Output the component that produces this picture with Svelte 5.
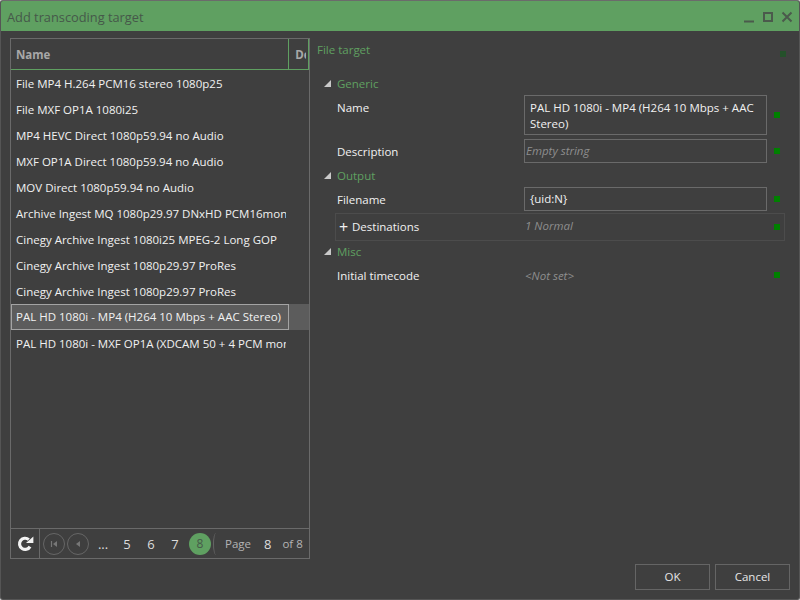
<script>
  const rows = [
    'File MP4 H.264 PCM16 stereo 1080p25',
    'File MXF OP1A 1080i25',
    'MP4 HEVC Direct 1080p59.94 no Audio',
    'MXF OP1A Direct 1080p59.94 no Audio',
    'MOV Direct 1080p59.94 no Audio',
    'Archive Ingest MQ 1080p29.97 DNxHD PCM16mono',
    'Cinegy Archive Ingest 1080i25 MPEG-2 Long GOP',
    'Cinegy Archive Ingest 1080p29.97 ProRes',
    'Cinegy Archive Ingest 1080p29.97 ProRes',
    'PAL HD 1080i - MP4 (H264 10 Mbps + AAC Stereo)',
    'PAL HD 1080i - MXF OP1A (XDCAM 50 + 4 PCM mono)'
  ];
</script>

<div class="win">
  <header class="title">
    <span class="title-text">Add transcoding target</span>
    <div class="win-btns">
      <svg width="12" height="12" viewBox="0 0 12 12"><path d="M1 10.5h10" stroke="#4b5a4c" stroke-width="2"/></svg>
      <svg width="12" height="12" viewBox="0 0 12 12"><rect x="2" y="2" width="8" height="8" fill="none" stroke="#4b5a4c" stroke-width="2"/></svg>
      <svg width="12" height="12" viewBox="0 0 12 12"><path d="M1.5 1.5l9 9M10.5 1.5l-9 9" stroke="#4b5a4c" stroke-width="2"/></svg>
    </div>
  </header>

  <div class="body">
    <section class="list">
      <div class="head">
        <div class="h-name">Name</div>
        <div class="h-de"><span>De</span></div>
      </div>
      <div class="rows">
        {#each rows as r, i}
          <div class="row" class:sel={i === 9}><span class="cell">{r}</span></div>
        {/each}
      </div>
      <div class="pager">
        <div class="refresh">
          <svg width="18" height="18" viewBox="0 0 18 18"><path d="M14 11.6A5.6 5.6 0 1 1 12.8 4.6" fill="none" stroke="#f2f2f2" stroke-width="3.2"/><path d="M10 8h7.4V1.5z" fill="#f2f2f2"/></svg>
        </div>
        <div class="pages">
          <span class="circle"><svg width="8" height="8" viewBox="0 0 8 8"><path d="M1.5 1v6" stroke="#777" stroke-width="1.2"/><path d="M7 1v6L3 4z" fill="#777"/></svg></span>
          <span class="circle"><svg width="8" height="8" viewBox="0 0 8 8"><path d="M6 1v6L2 4z" fill="#777"/></svg></span>
          <span class="num">...</span>
          <span class="num">5</span>
          <span class="num">6</span>
          <span class="num">7</span>
          <span class="cur">8</span>
          <span class="cut"></span>
          <span class="page-l">Page</span>
          <span class="page-n">8</span>
          <span class="page-l">of 8</span>
        </div>
      </div>
    </section>

    <section class="props">
      <div class="cat-title">File target <i class="dot dim"></i></div>

      <div class="group"><i class="tri"></i>Generic</div>
      <div class="prop tall">
        <label>Name</label>
        <div class="box multi">PAL HD 1080i - MP4 (H264 10 Mbps + AAC Stereo)</div>
        <i class="dot"></i>
      </div>
      <div class="prop">
        <label>Description</label>
        <div class="box hint">Empty string</div>
        <i class="dot"></i>
      </div>

      <div class="group"><i class="tri"></i>Output</div>
      <div class="prop">
        <label>Filename</label>
        <div class="box">{'{uid:N}'}</div>
        <i class="dot"></i>
      </div>
      <div class="prop dest">
        <label><b>+</b>Destinations</label>
        <div class="plain">1 Normal</div>
        <i class="dot"></i>
      </div>

      <div class="group"><i class="tri"></i>Misc</div>
      <div class="prop">
        <label>Initial timecode</label>
        <div class="plain">&lt;Not set&gt;</div>
        <i class="dot"></i>
      </div>
    </section>
  </div>

  <footer class="foot">
    <button>OK</button>
    <button>Cancel</button>
  </footer>
</div>

<style>
  :global(body) { margin: 0; background: #d8d8d8; }
  .win {
    width: 800px; height: 600px; box-sizing: border-box;
    display: flex; flex-direction: column;
    background: #3f3f3f; color: #f1f1f1;
    border-top: 1px solid #6b6b6b; border-right: 1px solid #555; border-left: 1px solid #555; border-bottom: 1px solid #555;
    border-radius: 3px;
    font: 11.5px/16px "Open Sans", "Noto Sans", sans-serif;
    overflow: hidden;
  }
  .title {
    height: 30px; flex: none; background: #5fa061; color: #46584a;
    display: flex; align-items: center; justify-content: space-between;
    padding: 1px 6px 0 6px; box-sizing: border-box; font-size: 12.8px; margin-left: -1px; margin-right: -1px;
  }
  .title-text { padding-left: 1px; }
  .win-btns { display: flex; gap: 7px; align-items: center; margin-right: 1px; padding-top: 1px; }
  .win-btns svg { display: block; }
  .body { flex: 1; display: flex; min-height: 0; padding: 7px 0 0 9px; }
  .list {
    width: 300px; height: 521px; box-sizing: border-box; flex: none;
    border: 1px solid #6a6a6a; display: flex; flex-direction: column;
  }
  .head { height: 31px; flex: none; display: flex; box-sizing: border-box; border-bottom: 1px solid #5fa061; font-weight: 700; color: #a8a8a8; }
  .h-name { width: 277px; padding-left: 5px; line-height: 31px; border-right: 1px solid #5fa061; }
  .h-de { width: 20px; border-right: 1px solid #5fa061; line-height: 31px; padding-left: 6px; box-sizing: border-box; overflow: hidden; }
  .h-de span { display: block; width: 11px; overflow: hidden; }
  .rows { flex: 1; min-height: 0; }
  .row { height: 26px; line-height: 25px; }
  .cell { display: block; width: 276px; padding-left: 5px; white-space: nowrap; overflow: hidden; height: 26px; box-sizing: border-box; border: 1px solid transparent; border-left: 0; }
  .row.sel { background: #5c5c5c; }
  .sel .cell { width: 278px; border: 1px solid #a3a3a3; padding-left: 4px; line-height: 24px; }
  .pager { height: 30px; flex: none; box-sizing: border-box; border-top: 1px solid #6a6a6a; display: flex; align-items: center; }
  .refresh { width: 29px; height: 29px; box-sizing: border-box; border-right: 1px solid #6a6a6a; display: flex; align-items: center; justify-content: center; }
  .refresh svg { display: block; }
  .pages { display: flex; align-items: center; flex: 1; padding-left: 3px; color: #dcdcdc; }
  .circle { width: 22px; height: 22px; box-sizing: border-box; border: 1px solid #666; border-radius: 50%; margin-right: 2px; display: flex; align-items: center; justify-content: center; flex: none; }
  .num { width: 24px; text-align: center; font-size: 13px; flex: none; }
  .cur { width: 22px; height: 22px; line-height: 22px; border-radius: 50%; background: #5fa061; color: #46584a; text-align: center; margin-left: 2px; flex: none; font-size: 12px; }
  .cut { width: 6px; height: 22px; box-sizing: border-box; border-left: 1px solid #666; border-radius: 50% 0 0 50% / 50% 0 0 50%; margin-left: 2px; flex: none; }
  .page-l { color: #b4b4b4; font-size: 11.5px; white-space: nowrap; }
  .pages .cut + .page-l { margin-left: 6px; }
  .page-n { margin: 0 11px 0 13px; font-size: 13px; }
  .props { flex: 1; padding-left: 7px; position: relative; }
  .cat-title { height: 34px; line-height: 24px; color: #5fa061; position: relative; }
  .group { height: 23px; line-height: 24px; color: #5fa061; padding-left: 20px; position: relative; }
  .dest + .group { margin-top: -1px; }
  .tri { position: absolute; left: 7px; top: 8px; width: 0; height: 0; border-style: solid; border-width: 0 0 7px 7px; border-color: transparent transparent #c9c9c9 transparent; }
  .prop { display: flex; align-items: flex-start; position: relative; width: 468px; height: 25px; box-sizing: border-box; padding-left: 20px; }
  .prop.tall { height: 44px; }
  .prop.tall + .prop + .group + .prop { height: 26px; }
  .prop label { width: 187px; flex: none; line-height: 26px; }
  .box { width: 243px; box-sizing: border-box; height: 24px; border: 1px solid #6a6a6a; padding: 0 5px; line-height: 22px; flex: none; }
  .multi { height: 40px; line-height: 16px; padding-top: 4px; }
  .hint { color: #8e8e8e; font-style: italic; padding-left: 1px; }
  .plain { color: #8e8e8e; font-style: italic; padding-left: 1px; line-height: 26px; }
  .dot { position: absolute; left: 457px; top: 9px; width: 6px; height: 6px; background: #008000; }
  .dot.dim { top: 13px; left: 463px; background: #24502a; display: block; }
  .prop.tall .dot { top: 17px; }
  .dest { border: 1px solid #4c4c4c; height: 28px; width: 450px; margin-left: 18px; padding-left: 3px; }
  .dest label { width: 185px; line-height: 26px; display: flex; align-items: center; }
  .dest label b { font-size: 16px; font-weight: 400; width: 13px; }
  .dest .plain { line-height: 24px; }
  .prop.dest .dot { left: 438px; top: 10px; }
  .foot { height: 41px; flex: none; display: flex; justify-content: flex-end; gap: 5px; padding: 6px 9px 0 0; box-sizing: border-box; }
  button { width: 75px; height: 26px; background: none; border: 1px solid #656565; color: #e6e6e6; font: inherit; padding: 0; }
</style>
